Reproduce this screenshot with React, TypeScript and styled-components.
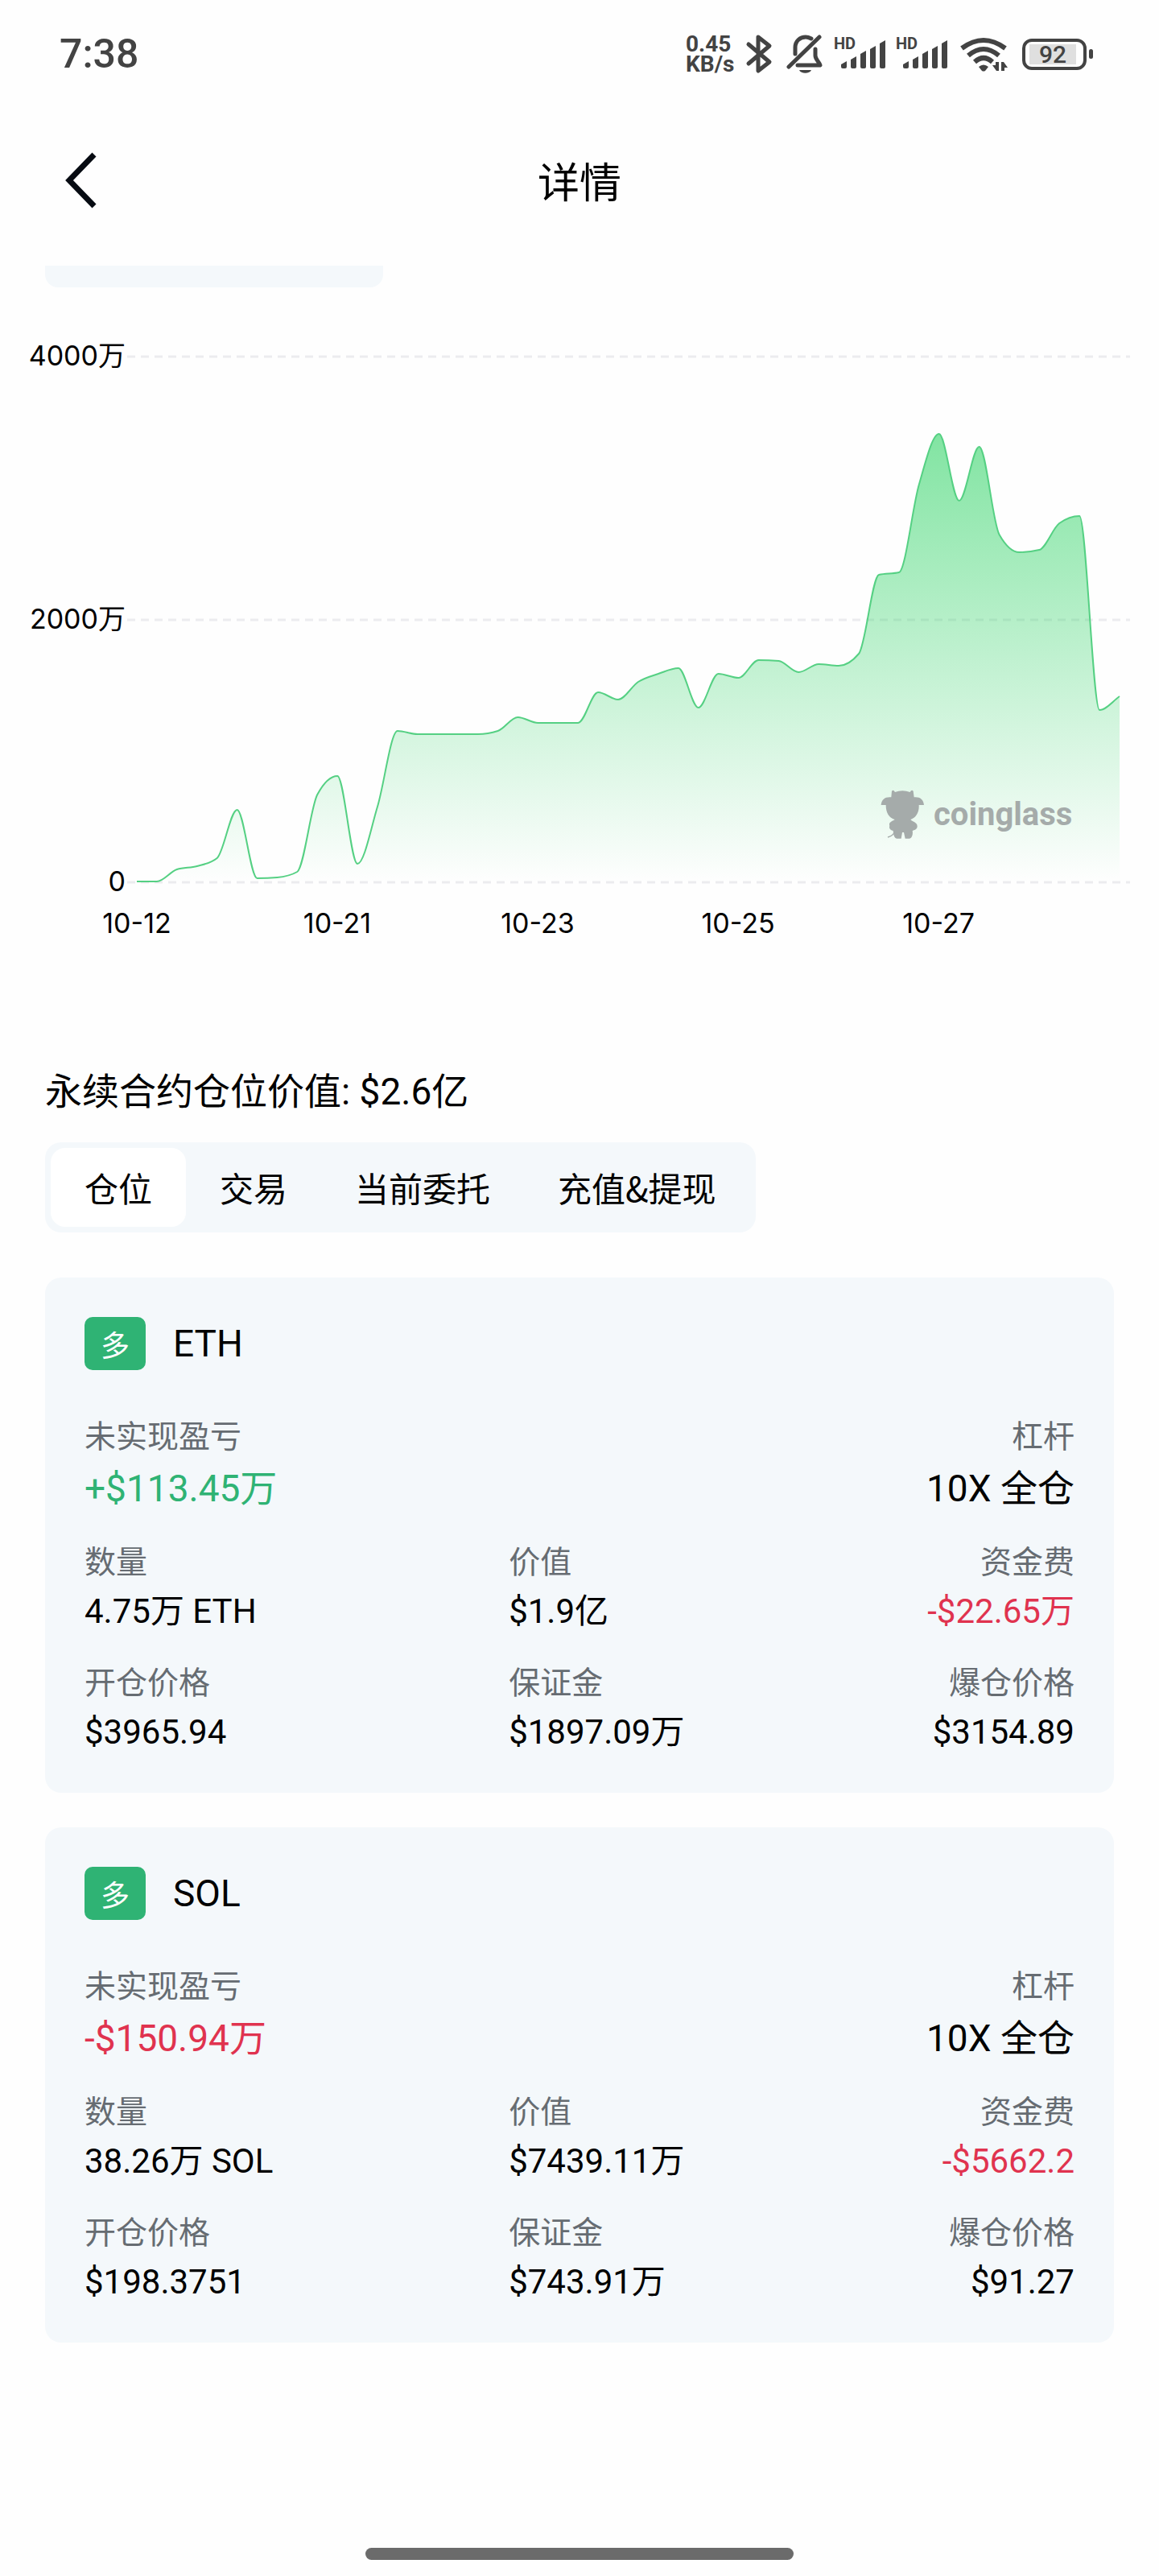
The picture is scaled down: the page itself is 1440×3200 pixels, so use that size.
import React, { useState } from "react";
import styled, { createGlobalStyle } from "styled-components";

const FONT = '"Noto Sans CJK SC", "Noto Sans", sans-serif';
const LATIN = 'Roboto, "Noto Sans CJK SC", sans-serif';
const AXIS = 'Inter, "Noto Sans CJK SC", sans-serif';

const colors = {
  page: "#fefefe",
  panel: "#f4f8fb",
  text: "#000000",
  muted: "#666c72",
  up: "#2fb374",
  down: "#e0334f",
  status: "#434343",
};

const GlobalStyle = createGlobalStyle`
  *, *::before, *::after { box-sizing: border-box; }
  body {
    margin: 0;
    background: ${colors.page};
    color: ${colors.text};
    font-family: ${FONT};
  }
`;

const Page = styled.div`
  display: flex;
  flex-direction: column;
  min-height: 100vh;
`;

/* ---------- status bar ---------- */

const StatusBar = styled.div`
  display: flex;
  align-items: center;
  justify-content: space-between;
  height: 134px;
  padding: 0 82px 0 74px;
  color: ${colors.status};
`;

const Clock = styled.time`
  font-family: ${LATIN};
  font-size: 50px;
  font-weight: 500;
  line-height: 60px;
`;

const StatusIcons = styled.div`
  display: flex;
  align-items: center;
  gap: 12px;
`;

const NetSpeed = styled.div`
  width: 60px;
  font-family: ${LATIN};
  font-size: 28px;
  font-weight: 700;
  line-height: 25px;
  white-space: pre-line;
`;

const Glyph = styled.svg`
  display: block;
  height: 50px;
  fill: none;
  stroke-linecap: round;
  stroke-linejoin: round;
`;

const HdText = styled.text`
  font-family: ${LATIN};
  font-size: 20px;
  font-weight: 700;
`;

const Battery = styled.div`
  display: flex;
  align-items: center;
  gap: 3px;

  &::after {
    content: "";
    width: 5px;
    height: 12px;
    border-radius: 3px;
    background: ${colors.status};
  }
`;

const BatteryShell = styled.div`
  width: 80px;
  height: 39px;
  padding: 3px 9px 3px 5px;
  border: 4px solid ${colors.status};
  border-radius: 12px;
`;

const BatteryLevel = styled.div`
  height: 25px;
  background: #dfdfdf;
  font-family: ${LATIN};
  font-size: 30px;
  font-weight: 500;
  line-height: 25px;
  text-align: center;
`;

const SIGNAL_TOPS = [34, 28, 21, 15, 8];

function SignalIcon() {
  return (
    <Glyph width="65" viewBox="0 0 65 50" role="img" aria-label="HD 信号">
      <HdText x="0" y="19" fill="currentColor">HD</HdText>
      {SIGNAL_TOPS.map((top, i) => (
        <path
          key={top}
          fill="currentColor"
          d={`M${9 + i * 12} ${top + 4}L${16 + i * 12} ${top}V41q0 2 -2 2h-3q-2 0 -2 -2Z`}
        />
      ))}
    </Glyph>
  );
}

function PhoneStatus() {
  return (
    <StatusBar>
      <Clock>7:38</Clock>
      <StatusIcons>
        <NetSpeed>{"0.45\nKB/s"}</NetSpeed>
        <Glyph width="40" viewBox="0 0 40 50" stroke="currentColor" strokeWidth="5" role="img" aria-label="蓝牙">
          <path d="M6 13 32 35 18 46V4L32 15 6 37" />
        </Glyph>
        <Glyph width="48" viewBox="0 0 48 50" stroke="currentColor" strokeWidth="5" role="img" aria-label="静音">
          <path d="M12 25V17C12 9 18 4 25 4c3 0 5 1 7 2" />
          <path d="M4 41 42 4" />
          <path d="M37 19v8c0 5 5 8 6 12H15" />
          <path d="M17 45h15c-2 5-13 5-15 0Z" fill="currentColor" stroke="none" />
        </Glyph>
        <SignalIcon />
        <SignalIcon />
        <Glyph width="68" viewBox="0 0 68 50" stroke="currentColor" role="img" aria-label="无线网络">
          <path d="M5 18Q32 -2 59 18" strokeWidth="6" strokeLinecap="butt" />
          <path d="M13 27Q32 11 51 27" strokeWidth="6" strokeLinecap="butt" />
          <path d="M21 35Q32 25 43 35" strokeWidth="6" strokeLinecap="butt" />
          <path d="M26 41q6 -5 12 0l-4 5q-2 1 -4 0Z" fill="currentColor" stroke="none" />
          <path d="M51 35v11h-3l-5 -7h4v-4ZM54 46V35h3l5 7h-4v4Z" fill="currentColor" stroke="none" />
        </Glyph>
        <Battery>
          <BatteryShell>
            <BatteryLevel>92</BatteryLevel>
          </BatteryShell>
        </Battery>
      </StatusIcons>
    </StatusBar>
  );
}

/* ---------- title bar ---------- */

const TitleBar = styled.header`
  display: grid;
  grid-template-columns: 1fr auto 1fr;
  align-items: center;
  height: 180px;
  padding: 0 56px;
`;

const BackButton = styled.button`
  display: flex;
  justify-self: start;
  padding: 16px 24px;
  border: 0;
  background: none;
  color: #070b12;
  cursor: pointer;
`;

const Title = styled.h1`
  margin: 0;
  font-size: 52px;
  font-weight: 400;
  line-height: 72px;
`;

/* ---------- chart ---------- */

const Body = styled.main`
  display: flex;
  flex-direction: column;
  padding-top: 16px;
`;

const CutPanel = styled.div`
  width: 420px;
  height: 27px;
  margin-left: 56px;
  border-radius: 0 0 16px 16px;
  background: ${colors.panel};
`;

const ChartSvg = styled.svg`
  display: block;
  width: 100%;
  height: auto;
`;

const AxisText = styled.text`
  font-family: ${AXIS};
  font-size: 34px;
  fill: ${colors.text};
`;

const Watermark = styled.text`
  font-family: ${LATIN};
  font-size: 40px;
  font-weight: 700;
`;

const PLOT = { left: 170, right: 1391, gridLeft: 158, gridRight: 1404, base: 739 };

const GRID = [
  { label: "4000万", y: 86 },
  { label: "2000万", y: 413 },
  { label: "0", y: 739 },
];

const DAYS = ["10-12", "10-21", "10-23", "10-25", "10-27"];

const LEVELS = [
  738, 738, 723, 719, 709, 649, 734, 733, 726, 630,
  607, 716, 645, 551, 555, 555, 555, 555, 551, 534,
  541, 541, 541, 503, 512, 490, 480, 473, 522, 480,
  485, 463, 464, 478, 468, 470, 455, 357, 354, 245,
  182, 265, 198, 307, 329, 326, 293, 284, 525, 508,
];

/* Monotone cubic: the tangent is flat at every peak and dip, so nothing overshoots. */
function smoothLine(ys: number[]): string {
  const step = (PLOT.right - PLOT.left) / (ys.length - 1);
  const slope = ys.map((y, i) => {
    if (i === 0 || i === ys.length - 1) return 0;
    const before = y - ys[i - 1];
    const after = ys[i + 1] - y;
    if (before * after <= 0) return 0;
    const size = Math.min(Math.abs(before), Math.abs(after), Math.abs(before + after) / 4);
    return 2 * size * Math.sign(after);
  });
  slope[ys.length - 1] = ys[ys.length - 1] - ys[ys.length - 2];
  let out = `M${PLOT.left} ${ys[0]}`;
  for (let i = 1; i < ys.length; i++) {
    const x = PLOT.left + i * step;
    const coords = [
      x - (step * 2) / 3, ys[i - 1] + slope[i - 1] / 3,
      x - step / 3, ys[i] - slope[i] / 3,
      x, ys[i],
    ];
    out += `C${coords.map((n) => n.toFixed(1)).join(" ")}`;
  }
  return out;
}

function ValueChart() {
  const line = smoothLine(LEVELS);
  return (
    <ChartSvg viewBox="0 0 1440 903" role="img" aria-label="仓位价值走势">
      <defs>
        <linearGradient id="area" gradientUnits="userSpaceOnUse" x1="0" y1="182" x2="0" y2={PLOT.base}>
          <stop offset="0" stopColor="#20d05a" stopOpacity="0.56" />
          <stop offset="1" stopColor="#20d05a" stopOpacity="0" />
        </linearGradient>
      </defs>
      {GRID.map(({ label, y }) => (
        <g key={label}>
          <line
            x1={PLOT.gridLeft}
            x2={PLOT.gridRight}
            y1={y}
            y2={y}
            stroke="#ececef"
            strokeWidth="3"
            strokeDasharray="10 7"
          />
          <AxisText x="156" y={y + 11} textAnchor="end">{label}</AxisText>
        </g>
      ))}
      <path d={`${line}V${PLOT.base}H${PLOT.left}Z`} fill="url(#area)" />
      <path d={line} fill="none" stroke="#55d083" strokeWidth="2" />
      {DAYS.map((day, i) => (
        <AxisText key={day} x={PLOT.left + i * 249} y="802" textAnchor="middle">{day}</AxisText>
      ))}
      <g fill="#a5abaa">
        <g transform="translate(1060 593) scale(0.3333)">
          <path d="M104 150C106 128 120 119 142 121L144 98Q150 91 156 102Q184 92 212 102Q218 91 224 98L227 121C248 119 262 128 264 150L245 150C247 180 232 198 214 204C220 212 240 214 239 230C239 241 227 243 221 246C224 260 218 275 210 275L194 275L189 252L183 252L179 275L162 275C154 273 150 262 149 246C140 243 132 238 136 228C130 214 148 210 155 204C134 198 122 180 122 150Z" />
          <path d="M153 254Q145 266 129 270" fill="none" stroke="#a5abaa" strokeWidth="4" />
        </g>
        <Watermark x="1160" y="668">coinglass</Watermark>
      </g>
    </ChartSvg>
  );
}

/* ---------- positions ---------- */

const Section = styled.section`
  display: flex;
  flex-direction: column;
  align-items: stretch;
  margin-top: 66px;
  padding: 0 56px;
`;

const SectionTitle = styled.h2`
  margin: 0 0 33px;
  font-family: ${LATIN};
  font-size: 46px;
  font-weight: 400;
  line-height: 60px;
`;

const TabList = styled.div`
  display: flex;
  align-self: flex-start;
  margin-bottom: 56px;
  padding: 7px;
  border-radius: 20px;
  background: ${colors.panel};
`;

const Tab = styled.button<{ $active: boolean }>`
  height: 98px;
  padding: 0 42px;
  border: 0;
  border-radius: 18px;
  background: ${({ $active }) => ($active ? "#ffffff" : "transparent")};
  color: inherit;
  font-family: inherit;
  font-size: 42px;
  line-height: 60px;
  white-space: nowrap;
  cursor: pointer;
`;

const CardList = styled.div`
  display: flex;
  flex-direction: column;
  gap: 43px;
`;

const Card = styled.article`
  display: flex;
  flex-direction: column;
  padding: 48px 49px 46px;
  border-radius: 20px;
  background: ${colors.panel};
`;

const CardHead = styled.div`
  display: flex;
  align-items: center;
  gap: 34px;
  height: 68px;
  margin-bottom: 50px;
`;

const SideBadge = styled.span`
  display: flex;
  align-items: center;
  justify-content: center;
  width: 76px;
  height: 66px;
  border-radius: 10px;
  background: ${colors.up};
  color: #ffffff;
  font-size: 36px;
  line-height: 48px;
`;

const Symbol = styled.h3`
  margin: 0;
  font-family: ${LATIN};
  font-size: 46px;
  font-weight: 400;
  line-height: 64px;
`;

const Fields = styled.dl`
  display: grid;
  grid-template-columns: 3fr 2fr 2fr;
  row-gap: 28px;
  margin: 0;
`;

type Tone = "plain" | "up" | "down";

const Field = styled.div<{ $wide?: boolean; $end?: boolean }>`
  display: flex;
  flex-direction: column;
  gap: 8px;
  grid-column: ${({ $wide }) => ($wide ? "span 2" : "auto")};
  text-align: ${({ $end }) => ($end ? "right" : "left")};
`;

const Label = styled.dt`
  color: ${colors.muted};
  font-size: 39px;
  line-height: 56px;
`;

const Value = styled.dd<{ $tone: Tone; $large?: boolean }>`
  margin: 0;
  color: ${({ $tone }) => ($tone === "plain" ? colors.text : colors[$tone])};
  font-family: ${LATIN};
  font-size: ${({ $large }) => ($large ? 46 : 42)}px;
  line-height: ${({ $large }) => ($large ? 64 : 58)}px;
  white-space: nowrap;
`;

type FieldData = { label: string; value: string; tone?: Tone; wide?: boolean; end?: boolean; large?: boolean };

const POSITIONS: { symbol: string; fields: FieldData[] }[] = [
  {
    symbol: "ETH",
    fields: [
      { label: "未实现盈亏", value: "+$113.45万", tone: "up", wide: true, large: true },
      { label: "杠杆", value: "10X 全仓", end: true, large: true },
      { label: "数量", value: "4.75万 ETH" },
      { label: "价值", value: "$1.9亿" },
      { label: "资金费", value: "-$22.65万", tone: "down", end: true },
      { label: "开仓价格", value: "$3965.94" },
      { label: "保证金", value: "$1897.09万" },
      { label: "爆仓价格", value: "$3154.89", end: true },
    ],
  },
  {
    symbol: "SOL",
    fields: [
      { label: "未实现盈亏", value: "-$150.94万", tone: "down", wide: true, large: true },
      { label: "杠杆", value: "10X 全仓", end: true, large: true },
      { label: "数量", value: "38.26万 SOL" },
      { label: "价值", value: "$7439.11万" },
      { label: "资金费", value: "-$5662.2", tone: "down", end: true },
      { label: "开仓价格", value: "$198.3751" },
      { label: "保证金", value: "$743.91万" },
      { label: "爆仓价格", value: "$91.27", end: true },
    ],
  },
];

const TABS = ["仓位", "交易", "当前委托", "充值&提现"];

const HomeBar = styled.div`
  width: 532px;
  height: 15px;
  margin: auto auto 20px;
  border-radius: 8px;
  background: #6b6b6b;
`;

export default function App() {
  const [tab, setTab] = useState(TABS[0]);
  return (
    <Page lang="zh-CN">
      <GlobalStyle />
      <PhoneStatus />
      <TitleBar>
        <BackButton type="button" aria-label="返回">
          <svg width="42" height="70" viewBox="0 0 42 70" fill="none" stroke="currentColor" strokeWidth="7">
            <path d="M37 3 6 35 37 67" />
          </svg>
        </BackButton>
        <Title>详情</Title>
      </TitleBar>
      <Body>
        <CutPanel />
        <ValueChart />
        <Section>
          <SectionTitle>永续合约仓位价值: $2.6亿</SectionTitle>
          <TabList role="tablist">
            {TABS.map((name) => (
              <Tab
                key={name}
                type="button"
                role="tab"
                aria-selected={name === tab}
                $active={name === tab}
                onClick={() => setTab(name)}
              >
                {name}
              </Tab>
            ))}
          </TabList>
          <CardList>
            {POSITIONS.map(({ symbol, fields }) => (
              <Card key={symbol}>
                <CardHead>
                  <SideBadge>多</SideBadge>
                  <Symbol>{symbol}</Symbol>
                </CardHead>
                <Fields>
                  {fields.map(({ label, value, tone = "plain", wide, end, large }) => (
                    <Field key={label} $wide={wide} $end={end}>
                      <Label>{label}</Label>
                      <Value $tone={tone} $large={large}>{value}</Value>
                    </Field>
                  ))}
                </Fields>
              </Card>
            ))}
          </CardList>
        </Section>
      </Body>
      <HomeBar />
    </Page>
  );
}
